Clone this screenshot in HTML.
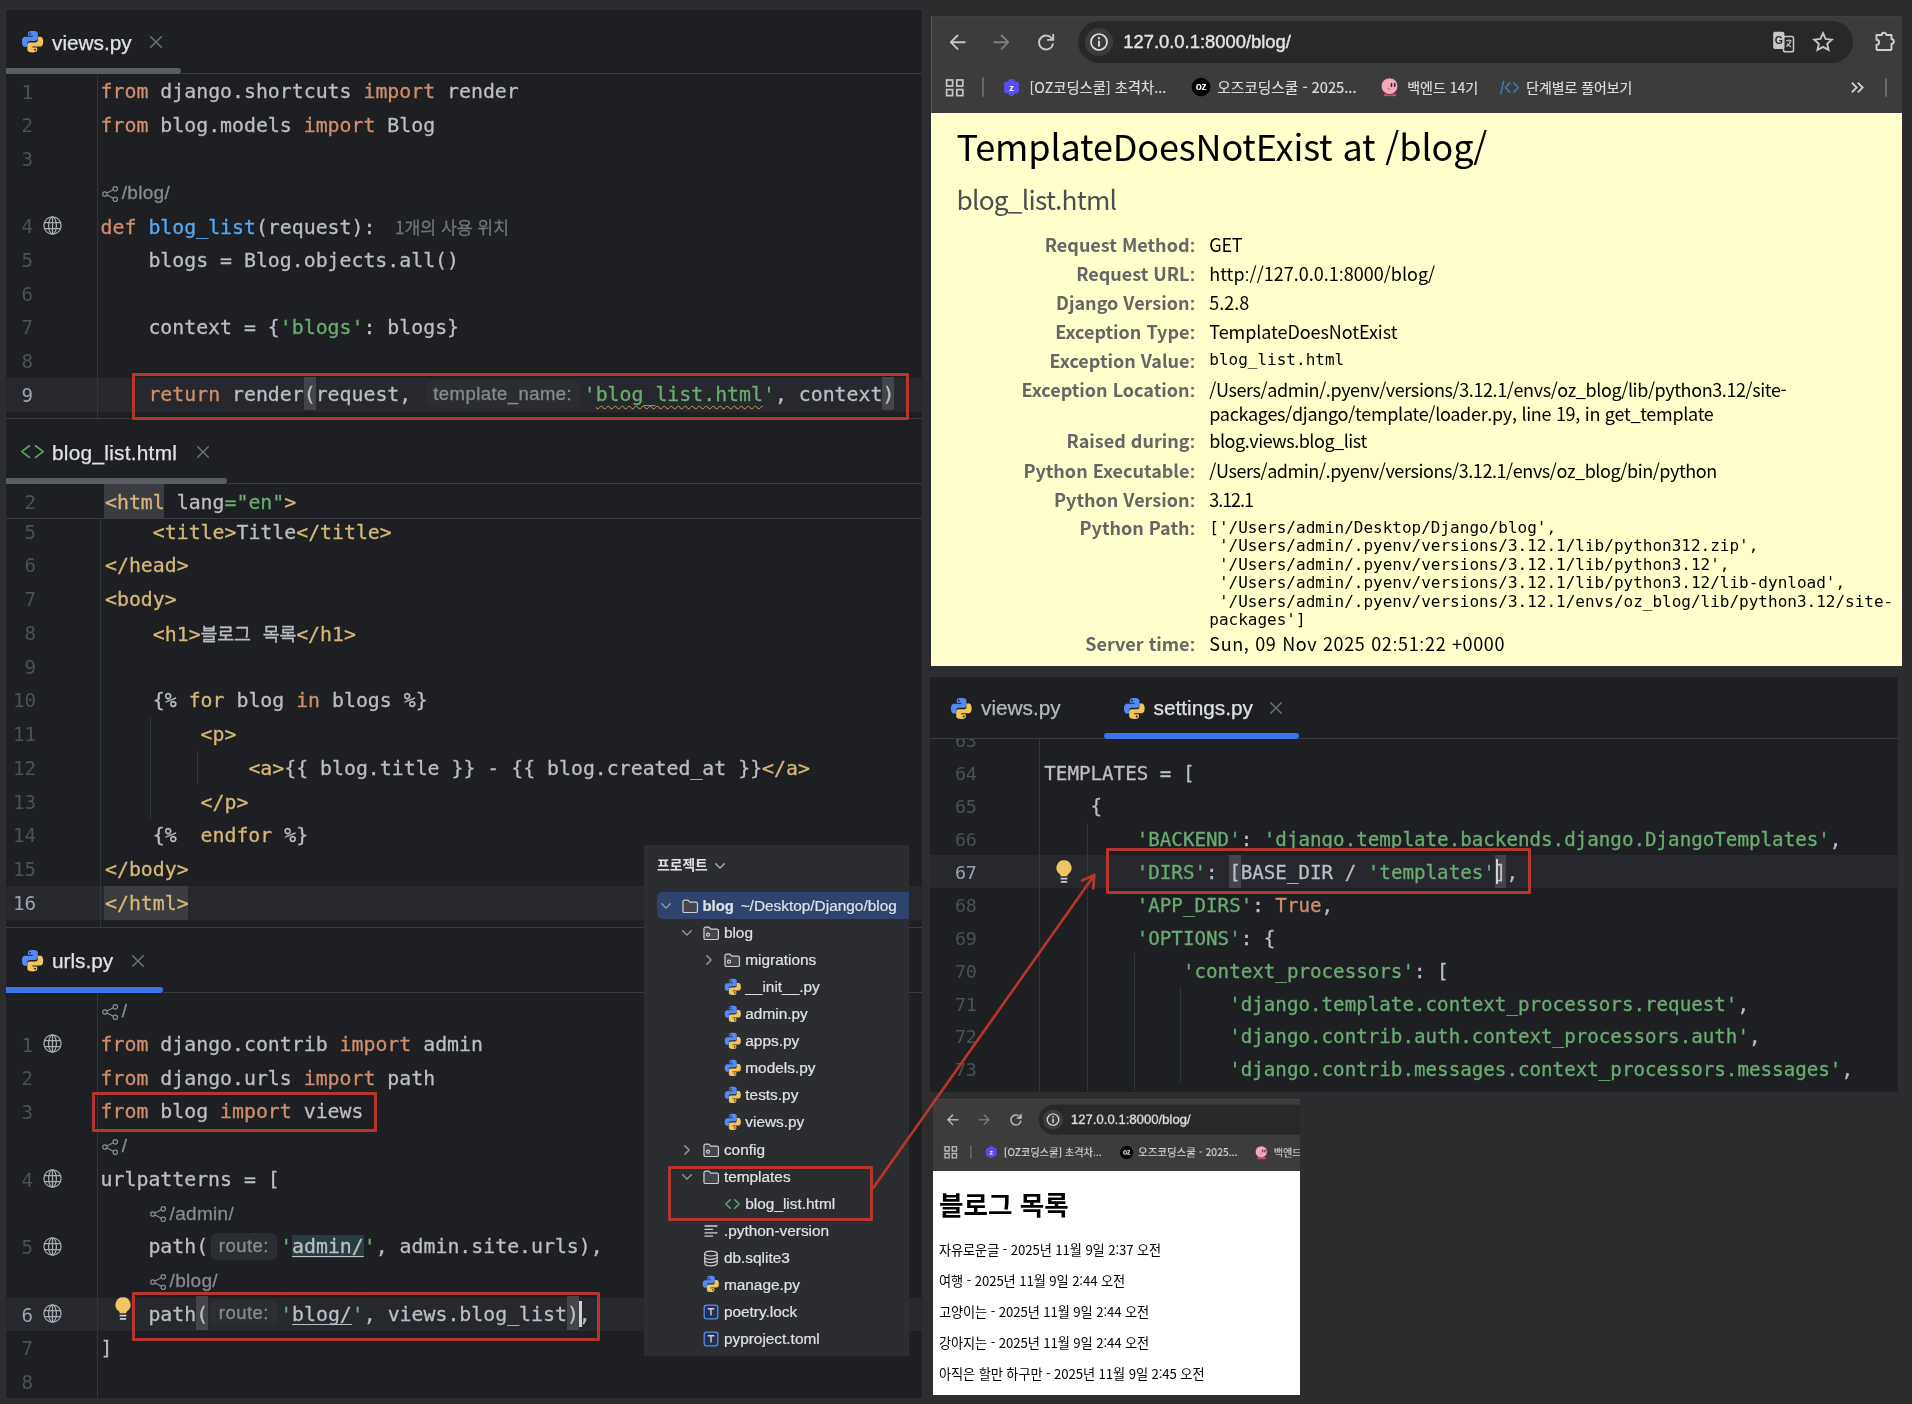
<!DOCTYPE html>
<html lang="ko">
<head>
<meta charset="utf-8">
<title>Django templates</title>
<style>
*{box-sizing:border-box;margin:0;padding:0}
html,body{width:1912px;height:1404px;overflow:hidden;background:#2c2d2f}
body{position:relative;will-change:transform;font-family:"Liberation Sans","Noto Sans CJK KR",sans-serif;color:#bcbec4}
.abs{position:absolute}
.ed{position:absolute;background:#1e1f22;overflow:hidden}
.hl{position:absolute;background:#393b40;height:1px}
.vl{position:absolute;background:#313438;width:1px;z-index:1}
.code{position:absolute;font-family:"DejaVu Sans Mono","Liberation Mono","Noto Sans CJK KR",monospace;font-size:19.85px;color:#bcbec4;-webkit-text-stroke:.3px}
.code>div{height:33.75px;line-height:33.75px;white-space:pre}
.nums{position:absolute;font-family:"DejaVu Sans Mono","Liberation Mono",monospace;font-size:19.2px;text-align:right;color:#4b5059;white-space:pre}
.nums>div{height:33.75px;line-height:33.75px}
.nums .cur{color:#a1a3ab}
.k{color:#cf8e6d}.s{color:#6aab73}.f{color:#56a8f5}.t{color:#d5b778}
.tab{position:absolute;-webkit-text-stroke:.25px;font-size:20.8px;color:#dfe1e5;white-space:pre}
.rowbg{position:absolute;background:#26282e}
.red{z-index:5;position:absolute;border:3.2px solid #b5362e;border-radius:1px}
.inl{font-family:"Liberation Sans","Noto Sans CJK KR",sans-serif;color:#868a91;font-size:19px;letter-spacing:.3px}
.u{text-decoration:underline;text-decoration-thickness:1px;text-underline-offset:3px;text-decoration-skip-ink:none}
.hint{display:inline-block;vertical-align:top;font-family:"Liberation Sans",sans-serif;color:#868a91;font-size:18.5px;letter-spacing:.45px;background:#2b2d30;border-radius:6px;height:27px;line-height:25.6px;margin-top:2.4px;text-align:center}

.chrome{position:absolute;background:#3c3c3c}
.pill{position:absolute;background:#282828}
.url{position:absolute;-webkit-text-stroke:.4px;color:#e3e3e3;white-space:pre}
.bm{position:absolute;-webkit-text-stroke:.2px;color:#dcdcdc;white-space:pre;font-family:"Noto Sans CJK KR","Liberation Sans",sans-serif}
.dj{position:absolute;font-family:"Noto Sans CJK KR","Liberation Sans",sans-serif;white-space:pre;color:#000;font-size:18px;line-height:26px}
.dj.th{color:#666;font-weight:bold;text-align:right;left:960px;width:235.5px}
.dj.td{left:1209.3px}
.mono{font-family:"DejaVu Sans Mono","Liberation Mono",monospace;font-size:16px}
.c2{font-size:19.22px}
.c2>div,.n2>div{height:32.9px !important;line-height:32.9px !important}
.n2{font-size:18.4px;letter-spacing:-.35px}
.li{left:6.5px;letter-spacing:-.1px;font:13.2px/20px "Noto Sans CJK KR","Liberation Sans",sans-serif;color:#000;white-space:pre}
.tr{position:absolute;-webkit-text-stroke:.2px;font:15.4px/22px "Liberation Sans","Noto Sans CJK KR",sans-serif;color:#dfe1e5;white-space:pre}
.tr b{font-weight:bold;font-size:14.9px}
.use{font-family:"Noto Sans CJK KR","Liberation Sans",sans-serif;font-size:17.2px;color:#6f737a;margin-left:19.5px}
.br{background:#43454a;display:inline-block;vertical-align:top;margin-top:-1.6px;padding-top:1.6px;height:33.3px;line-height:33.75px}
.wavy{text-decoration:underline wavy #c9a14c;text-decoration-thickness:1.2px;text-underline-offset:4px;text-decoration-skip-ink:none}
.ko{font-family:"Noto Sans CJK KR",sans-serif;font-size:18.4px;letter-spacing:-0.2px}
.c{font-style:normal;font-family:"Liberation Sans",sans-serif}
.c2 .br{height:32.7px;line-height:32.9px}
.v1>div{height:33.7px !important;line-height:33.7px !important}
</style>
</head>
<body>
<!-- ============ LEFT IDE COLUMN ============ -->
<div class="ed" id="left" style="left:6px;top:10px;width:916px;height:1388px"></div>

<!-- views.py -->
<div class="tab" style="left:52px;top:31px">views.py</div>
<div class="abs" style="left:6px;top:68px;width:175px;height:6px;background:#5a5d63;border-radius:0 3px 3px 0"></div>
<div class="hl" style="left:181px;top:73px;width:741px"></div>
<div class="vl" style="left:97px;top:75px;height:343px"></div>
<div class="rowbg" style="left:6px;top:378.2px;width:916px;height:33.8px"></div>
<div class="nums v1" style="left:6px;top:75.6px;width:27px"><div>1</div><div>2</div><div>3</div><div> </div><div>4</div><div>5</div><div>6</div><div>7</div><div>8</div><div class="cur">9</div></div>
<div class="code v1" style="left:100.6px;top:75.2px">
<div><span class="k">from</span> django.shortcuts <span class="k">import</span> render</div>
<div><span class="k">from</span> blog.models <span class="k">import</span> Blog</div>
<div> </div>
<div class="inl" style="padding-left:21.2px">/blog/</div>
<div><span class="k">def</span> <span class="f">blog_list</span>(request):<span class="use">1개의 사용 위치</span></div>
<div>    blogs = Blog.objects.all()</div>
<div> </div>
<div>    context = {<span class="s">'blogs'</span>: blogs}</div>
<div> </div>
<div>    <span class="k">return</span> render<span class="br">(</span>request, <span class="hint" style="width:154px;margin-left:2.5px;margin-right:4px">template_name:</span><span class="s">'<span class="wavy">blog_list.html</span>'</span>, context<span class="br">)</span></div>
</div>
<div class="red" style="left:132px;top:373px;width:777px;height:47px"></div>
<div class="hl" style="left:6px;top:418px;width:916px"></div>

<!-- blog_list.html -->
<div class="tab" style="left:52px;top:440.8px;letter-spacing:.27px">blog_list.html</div>
<div class="abs" style="left:6px;top:478px;width:221px;height:6px;background:#5a5d63;border-radius:0 3px 3px 0"></div>
<div class="hl" style="left:227px;top:483px;width:695px"></div>
<div class="vl" style="left:100px;top:519px;height:408px"></div>
<div class="rowbg" style="left:6px;top:886px;width:916px;height:33.5px"></div>
<div class="abs" style="left:104px;top:886px;width:84px;height:33.5px;background:#3a3c41"></div>
<div class="vl" style="left:150px;top:717px;height:101px"></div>
<div class="vl" style="left:197px;top:751px;height:33px"></div>
<div class="nums" style="left:6px;top:515.7px;width:30px"><div>5</div><div>6</div><div>7</div><div>8</div><div>9</div><div>10</div><div>11</div><div>12</div><div>13</div><div>14</div><div>15</div><div class="cur">16</div></div>
<div class="code" style="left:105px;top:515.7px">
<div>    <span class="t">&lt;title&gt;</span>Title<span class="t">&lt;/title&gt;</span></div>
<div><span class="t">&lt;/head&gt;</span></div>
<div><span class="t">&lt;body&gt;</span></div>
<div>    <span class="t">&lt;h1&gt;</span><span class="ko">블로그</span> <span class="ko">목록</span><span class="t">&lt;/h1&gt;</span></div>
<div> </div>
<div>    {% <span class="t">for</span> blog <span class="k">in</span> blogs %}</div>
<div>        <span class="t">&lt;p&gt;</span></div>
<div>            <span class="t">&lt;a&gt;</span>{{ blog.title }} - {{ blog.created_at }}<span class="t">&lt;/a&gt;</span></div>
<div>        <span class="t">&lt;/p&gt;</span></div>
<div>    {%  <span class="t">endfor</span> %}</div>
<div><span class="t">&lt;/body&gt;</span></div>
<div><span class="t">&lt;/html&gt;</span></div>
</div>
<!-- sticky line -->
<div class="abs" style="left:6px;top:484px;width:916px;height:35px;background:#1e1f22;border-bottom:1px solid #393b40"></div>
<div class="abs" style="left:104px;top:484px;width:60px;height:34px;background:#3a3c41"></div>
<div class="nums" style="left:6px;top:485.9px;width:30px"><div>2</div></div>
<div class="code" style="left:105px;top:485.9px"><div><span class="t">&lt;html</span> lang<span class="s">="en"</span><span class="t">&gt;</span></div></div>
<div class="hl" style="left:6px;top:927px;width:916px"></div>

<!-- urls.py -->
<div class="tab" style="left:52px;top:949px">urls.py</div>
<div class="abs" style="left:6px;top:986.5px;width:157px;height:6.5px;background:#3d73e8;border-radius:0 3px 3px 0"></div>
<div class="hl" style="left:163px;top:992px;width:759px"></div>
<div class="vl" style="left:97px;top:994px;height:404px"></div>
<div class="rowbg" style="left:6px;top:1297.5px;width:916px;height:33px"></div>
<div class="nums" style="left:6px;top:994.9px;width:27px"><div> </div><div>1</div><div>2</div><div>3</div><div> </div><div>4</div><div> </div><div>5</div><div> </div><div class="cur">6</div><div>7</div><div>8</div></div>
<div class="code" style="left:100.6px;top:994.1px">
<div class="inl" style="padding-left:21.2px">/</div>
<div><span class="k">from</span> django.contrib <span class="k">import</span> admin</div>
<div><span class="k">from</span> django.urls <span class="k">import</span> path</div>
<div><span class="k">from</span> blog <span class="k">import</span> views</div>
<div class="inl" style="padding-left:21.2px">/</div>
<div>urlpatterns = [</div>
<div class="inl" style="padding-left:69px">/admin/</div>
<div>    path(<span class="hint" style="width:65.5px;margin-left:3px;margin-right:3.5px">route:</span><span class="s">'</span><span class="u" style="background:#293c40">admin/</span><span class="s">'</span>, admin.site.urls),</div>
<div class="inl" style="padding-left:69px">/blog/</div>
<div>    path<span class="br">(</span><span class="hint" style="width:65.5px;margin-left:3px;margin-right:3.5px">route:</span><span class="s">'</span><span class="u">blog/</span><span class="s">'</span>, views.blog_list<span class="br">)</span>,</div>
<div>]</div>
<div> </div>
</div>
<div class="red" style="left:92px;top:1092.2px;width:284.5px;height:40.2px"></div>
<div class="red" style="left:132px;top:1292.2px;width:468px;height:48.8px"></div>

<!-- ============ BROWSER 1 ============ -->
<!--CHROME-->
<!-- ============ BROWSER 1 toolbar ============ -->
<div class="chrome" style="left:931px;top:16px;width:970.5px;height:97px;border-top:1.5px solid #414141;border-left:1.8px solid #5a5a5a">
<div class="abs" style="left:-1.8px;top:-1.5px">
<div class="pill" style="left:148px;top:5px;width:774.5px;height:42px;border-radius:21px"></div>
<div class="abs" style="left:154.3px;top:12.1px;width:28.2px;height:28.2px;border-radius:50%;background:#3c3c3c"></div>
<svg class="abs" style="left:17px;top:16px" width="110" height="21" viewBox="948 32 110 21" fill="none" stroke-linecap="round" stroke-linejoin="round"><path d="M965.800 42.200H952M958.500 35.500l-6.700 6.700 6.700 6.700" stroke="#c7c7c7" stroke-width="1.900"/><path d="M995.300 42.200h13.800M1002.600 35.500l6.700 6.700-6.700 6.700" stroke="#7d7d7d" stroke-width="1.900"/><path d="M1053.300 39.300a7 7 0 1 0 .6 4.800" stroke="#c7c7c7" stroke-width="1.900"/><path d="M1054.200 34.600v5.300h-5.300" stroke="#c7c7c7" stroke-width="1.900"/></svg>
<svg class="abs" style="left:158.4px;top:16.2px" width="20" height="20" viewBox="0 0 20 20" fill="none"><circle cx="10" cy="10" r="8" stroke="#e3e3e3" stroke-width="1.700"/><path d="M10 9.300v4.800" stroke="#e3e3e3" stroke-width="1.800" stroke-linecap="round"/><circle cx="10" cy="6.200" r="1.100" fill="#e3e3e3"/></svg>
<div class="url" style="left:193px;top:15px;font-size:18.4px;line-height:22px">127.0.0.1:8000/blog/</div>
<svg class="abs" style="left:842px;top:14px" width="24" height="24" viewBox="1773 30 24 24" fill="none"><rect x="1784.500" y="36.400" width="10" height="15.300" rx="1.800" stroke="#c7c7c7" stroke-width="1.500"/><path d="M1787 40.800h5.600M1789.800 39.300v1.500M1791.600 40.800c-.5 2.600-2.200 4.600-4.400 5.800M1788.200 43.200c.8 1.600 2.200 2.900 3.800 3.700" stroke="#c7c7c7" stroke-width="1.100"/><rect x="1774.200" y="31.800" width="11.200" height="17.200" rx="1.800" fill="#c7c7c7"/><text x="1779.800" y="44.200" font-family="Liberation Sans,sans-serif" font-size="10.500" font-weight="bold" fill="#282828" text-anchor="middle">G</text></svg>
<svg class="abs" style="left:881px;top:14px" width="24" height="24" viewBox="-12 -12 24 24" fill="none"><path d="M0-8.800l2.600 5.700 6.200.7-4.600 4.200 1.300 6.100L0 4.800l-5.500 3.100 1.300-6.100-4.600-4.200 6.200-.7z" stroke="#c7c7c7" stroke-width="1.900" stroke-linejoin="miter"/></svg>
<svg class="abs" style="left:944px;top:13px" width="24" height="24" viewBox="1875 29 24 24" fill="none"><path d="M1877.500 35h5.300a2.300 2.300 0 1 1 4.600 0h5.100v4.300a2.300 2.300 0 1 1 0 4.600v5.300a.8.800 0 0 1-.8.800h-13.400a.8.800 0 0 1-.8-.8v-4.300a2.600 2.600 0 1 0 0-5.200z" stroke="#d0d0d0" stroke-width="1.900" stroke-linejoin="round"/></svg>
<svg class="abs" style="left:15px;top:62px" width="20" height="20" viewBox="946 78 20 20" fill="none" stroke="#c7c7c7" stroke-width="1.700"><rect x="947.600" y="80" width="6" height="6"/><rect x="957.800" y="80" width="6" height="6"/><rect x="947.600" y="89.600" width="6" height="6"/><rect x="957.800" y="89.600" width="6" height="6"/></svg>
<div class="abs" style="left:52.2px;top:61.8px;width:2px;height:19.600px;background:#666;border-radius:1px"></div>
<svg class="abs" style="left:72px;top:62px" width="19" height="19" viewBox="-9.500 -9.500 19 19"><g fill="#5b4cf0"><circle r="6.300"/><circle cx="0" cy="-5" r="3.400"/><circle cx="4.300" cy="-2.500" r="3.400"/><circle cx="4.300" cy="2.500" r="3.400"/><circle cx="0" cy="5" r="3.400"/><circle cx="-4.300" cy="2.500" r="3.400"/><circle cx="-4.300" cy="-2.500" r="3.400"/></g><text x="0.200" y="3.200" font-family="Liberation Sans,sans-serif" font-size="9.500" font-weight="bold" fill="#fff" text-anchor="middle">z</text></svg>
<div class="bm" style="left:99.3px;top:60px;font-size:14.3px;line-height:22px">[OZ코딩스쿨] 초격차...</div>
<svg class="abs" style="left:261px;top:61.5px" width="20" height="20" viewBox="-10 -10 20 20"><circle r="9.300" fill="#000"/><text x="0" y="3.300" font-family="Liberation Sans,sans-serif" font-size="10" font-weight="bold" fill="#fff" text-anchor="middle" letter-spacing="-0.300">oz</text></svg>
<div class="bm" style="left:287px;top:60px;font-size:14.7px;line-height:22px">오즈코딩스쿨 - 2025...</div>
<svg class="abs" style="left:449px;top:60.5px" width="21" height="21" viewBox="-10.500 -10.500 21 21"><ellipse cx="-2.500" cy="8.300" rx="3.300" ry="1.500" fill="#d6456a"/><ellipse cx="3.500" cy="8.300" rx="3.300" ry="1.500" fill="#d6456a"/><circle cx="0" cy="-0.300" r="8.300" fill="#f6a9bd" stroke="#4a2a33" stroke-width=".7"/><ellipse cx="2" cy="-1.500" rx=".9" ry="2.200" fill="#2b2b3a"/><ellipse cx="5.200" cy="-1.500" rx=".9" ry="2.200" fill="#2b2b3a"/><ellipse cx="-.8" cy="2.300" rx="1.500" ry=".9" fill="#ee6d8f"/></svg>
<div class="bm" style="left:477px;top:60px;font-size:14px;line-height:22px">백엔드 14기</div>
<svg class="abs" style="left:569px;top:62px" width="22" height="19" viewBox="1500 78 22 19" fill="none" stroke="#3f7fc6" stroke-width="1.400" stroke-linecap="round" stroke-linejoin="round"><path d="M1504.600 81.500l-2.800 12.400M1510.800 83l-4.400 4.600 4.400 4.600M1514.800 83l4.400 4.600-4.400 4.600"/></svg>
<div class="bm" style="left:596px;top:60px;font-size:13.9px;line-height:22px">단계별로 풀어보기</div>
<svg class="abs" style="left:919px;top:64px" width="16" height="15" viewBox="1850 80 16 15" fill="none" stroke="#d0d0d0" stroke-width="1.800"><path d="M1852.800 82.700l4.900 4.800-4.900 4.800M1858.800 82.700l4.900 4.800-4.900 4.800"/></svg>
<div class="abs" style="left:954.5px;top:62px;width:2.200px;height:19.300px;background:#6a6a6a;border-radius:1px"></div>
</div>
</div>
<!-- ============ BROWSER 2 toolbar ============ -->
<div class="chrome" style="left:932.5px;top:1099px;width:367.5px;height:72px;overflow:hidden;border-top:1px solid #474747">
<div class="abs" style="left:0;top:1.1px;width:970px;height:97px;transform:scale(0.7143);transform-origin:0 0">
<div class="pill" style="left:148px;top:5px;width:774.5px;height:42px;border-radius:21px"></div>
<div class="abs" style="left:154.3px;top:12.1px;width:28.2px;height:28.2px;border-radius:50%;background:#3c3c3c"></div>
<svg class="abs" style="left:17px;top:16px" width="110" height="21" viewBox="948 32 110 21" fill="none" stroke-linecap="round" stroke-linejoin="round"><path d="M965.800 42.200H952M958.500 35.500l-6.700 6.700 6.700 6.700" stroke="#c7c7c7" stroke-width="1.900"/><path d="M995.300 42.200h13.800M1002.600 35.500l6.700 6.700-6.700 6.700" stroke="#7d7d7d" stroke-width="1.900"/><path d="M1053.300 39.300a7 7 0 1 0 .6 4.800" stroke="#c7c7c7" stroke-width="1.900"/><path d="M1054.200 34.600v5.300h-5.300" stroke="#c7c7c7" stroke-width="1.900"/></svg>
<svg class="abs" style="left:158.4px;top:16.2px" width="20" height="20" viewBox="0 0 20 20" fill="none"><circle cx="10" cy="10" r="8" stroke="#e3e3e3" stroke-width="1.700"/><path d="M10 9.300v4.800" stroke="#e3e3e3" stroke-width="1.800" stroke-linecap="round"/><circle cx="10" cy="6.200" r="1.100" fill="#e3e3e3"/></svg>
<div class="url" style="left:193px;top:15px;font-size:18.4px;line-height:22px">127.0.0.1:8000/blog/</div>
<svg class="abs" style="left:842px;top:14px" width="24" height="24" viewBox="1773 30 24 24" fill="none"><rect x="1784.500" y="36.400" width="10" height="15.300" rx="1.800" stroke="#c7c7c7" stroke-width="1.500"/><path d="M1787 40.800h5.600M1789.800 39.300v1.500M1791.600 40.800c-.5 2.600-2.200 4.600-4.400 5.800M1788.200 43.200c.8 1.600 2.200 2.900 3.800 3.700" stroke="#c7c7c7" stroke-width="1.100"/><rect x="1774.200" y="31.800" width="11.200" height="17.200" rx="1.800" fill="#c7c7c7"/><text x="1779.800" y="44.200" font-family="Liberation Sans,sans-serif" font-size="10.500" font-weight="bold" fill="#282828" text-anchor="middle">G</text></svg>
<svg class="abs" style="left:881px;top:14px" width="24" height="24" viewBox="-12 -12 24 24" fill="none"><path d="M0-8.800l2.600 5.700 6.200.7-4.600 4.200 1.300 6.100L0 4.800l-5.500 3.100 1.300-6.100-4.600-4.200 6.200-.7z" stroke="#c7c7c7" stroke-width="1.900" stroke-linejoin="miter"/></svg>
<svg class="abs" style="left:944px;top:13px" width="24" height="24" viewBox="1875 29 24 24" fill="none"><path d="M1877.500 35h5.300a2.300 2.300 0 1 1 4.600 0h5.100v4.300a2.300 2.300 0 1 1 0 4.600v5.300a.8.800 0 0 1-.8.800h-13.400a.8.800 0 0 1-.8-.8v-4.300a2.600 2.600 0 1 0 0-5.200z" stroke="#d0d0d0" stroke-width="1.900" stroke-linejoin="round"/></svg>
<svg class="abs" style="left:15px;top:62px" width="20" height="20" viewBox="946 78 20 20" fill="none" stroke="#c7c7c7" stroke-width="1.700"><rect x="947.600" y="80" width="6" height="6"/><rect x="957.800" y="80" width="6" height="6"/><rect x="947.600" y="89.600" width="6" height="6"/><rect x="957.800" y="89.600" width="6" height="6"/></svg>
<div class="abs" style="left:52.2px;top:61.8px;width:2px;height:19.600px;background:#666;border-radius:1px"></div>
<svg class="abs" style="left:72px;top:62px" width="19" height="19" viewBox="-9.500 -9.500 19 19"><g fill="#5b4cf0"><circle r="6.300"/><circle cx="0" cy="-5" r="3.400"/><circle cx="4.300" cy="-2.500" r="3.400"/><circle cx="4.300" cy="2.500" r="3.400"/><circle cx="0" cy="5" r="3.400"/><circle cx="-4.300" cy="2.500" r="3.400"/><circle cx="-4.300" cy="-2.500" r="3.400"/></g><text x="0.200" y="3.200" font-family="Liberation Sans,sans-serif" font-size="9.500" font-weight="bold" fill="#fff" text-anchor="middle">z</text></svg>
<div class="bm" style="left:99.3px;top:60px;font-size:14.3px;line-height:22px">[OZ코딩스쿨] 초격차...</div>
<svg class="abs" style="left:261px;top:61.5px" width="20" height="20" viewBox="-10 -10 20 20"><circle r="9.300" fill="#000"/><text x="0" y="3.300" font-family="Liberation Sans,sans-serif" font-size="10" font-weight="bold" fill="#fff" text-anchor="middle" letter-spacing="-0.300">oz</text></svg>
<div class="bm" style="left:287px;top:60px;font-size:14.7px;line-height:22px">오즈코딩스쿨 - 2025...</div>
<svg class="abs" style="left:449px;top:60.5px" width="21" height="21" viewBox="-10.500 -10.500 21 21"><ellipse cx="-2.500" cy="8.300" rx="3.300" ry="1.500" fill="#d6456a"/><ellipse cx="3.500" cy="8.300" rx="3.300" ry="1.500" fill="#d6456a"/><circle cx="0" cy="-0.300" r="8.300" fill="#f6a9bd" stroke="#4a2a33" stroke-width=".7"/><ellipse cx="2" cy="-1.500" rx=".9" ry="2.200" fill="#2b2b3a"/><ellipse cx="5.200" cy="-1.500" rx=".9" ry="2.200" fill="#2b2b3a"/><ellipse cx="-.8" cy="2.300" rx="1.500" ry=".9" fill="#ee6d8f"/></svg>
<div class="bm" style="left:477px;top:60px;font-size:14px;line-height:22px">백엔드 14기</div>
</div>
</div>
<!--/CHROME-->
<div class="abs" id="yellow" style="left:931px;top:113px;width:970.5px;height:553px;background:#ffffcc"></div>
<div class="dj" style="left:956.5px;top:118.8px;font-size:36px;line-height:52px;letter-spacing:-0.15px">TemplateDoesNotExist at /blog/</div>
<div class="dj" style="left:956.5px;top:179.4px;font-size:26.3px;line-height:40px;font-weight:400;color:#4d4d52;letter-spacing:-0.78px">blog_list.html</div>

<div class="dj th" style="top:231.1px">Request Method<i class="c">:</i></div><div class="dj td" style="top:231.1px;letter-spacing:-0.27px">GET</div>
<div class="dj th" style="top:260.0px">Request URL<i class="c">:</i></div><div class="dj td" style="top:260.0px">http<i class="c">:</i>//127.0.0.1<i class="c">:</i>8000/blog/</div>
<div class="dj th" style="top:288.9px">Django Version<i class="c">:</i></div><div class="dj td" style="top:288.9px">5.2.8</div>
<div class="dj th" style="top:317.8px">Exception Type<i class="c">:</i></div><div class="dj td" style="top:317.8px;letter-spacing:-0.07px">TemplateDoesNotExist</div>
<div class="dj th" style="top:346.7px">Exception Value<i class="c">:</i></div><div class="dj td mono" style="top:346.7px">blog_list.html</div>
<div class="dj th" style="top:375.6px">Exception Location<i class="c">:</i></div><div class="dj td" style="top:375.6px;letter-spacing:-0.4px">/Users/admin/.pyenv/versions/3.12.1/envs/oz_blog/lib/python3.12/site-</div>
<div class="dj td" style="top:399.9px;letter-spacing:-0.3px">packages/django/template/loader.py, line 19, in get_template</div>
<div class="dj th" style="top:427.2px">Raised during<i class="c">:</i></div><div class="dj td" style="top:427.2px;letter-spacing:-0.47px">blog.views.blog_list</div>
<div class="dj th" style="top:456.7px">Python Executable<i class="c">:</i></div><div class="dj td" style="top:456.7px;letter-spacing:-0.42px">/Users/admin/.pyenv/versions/3.12.1/envs/oz_blog/bin/python</div>
<div class="dj th" style="top:485.7px">Python Version<i class="c">:</i></div><div class="dj td" style="top:485.7px;letter-spacing:-1.06px">3.12.1</div>
<div class="dj th" style="top:514.2px">Python Path<i class="c">:</i></div>
<div class="dj td mono" style="top:519px;line-height:18.4px">['/Users/admin/Desktop/Django/blog',
 '/Users/admin/.pyenv/versions/3.12.1/lib/python312.zip',
 '/Users/admin/.pyenv/versions/3.12.1/lib/python3.12',
 '/Users/admin/.pyenv/versions/3.12.1/lib/python3.12/lib-dynload',
 '/Users/admin/.pyenv/versions/3.12.1/envs/oz_blog/lib/python3.12/site-
packages']</div>
<div class="dj th" style="top:629.7px">Server time<i class="c">:</i></div><div class="dj td" style="top:629.7px;letter-spacing:0.64px">Sun, 09 Nov 2025 02<i class="c">:</i>51<i class="c">:</i>22 +0000</div>

<!-- ============ SETTINGS EDITOR ============ -->
<div class="ed" style="left:930px;top:677px;width:968px;height:414.5px"></div>
<div class="tab" style="left:981px;top:696px;color:#b4b8bf">views.py</div>
<div class="tab" style="left:1153.5px;top:696px">settings.py</div>
<div class="abs" style="left:1104px;top:733px;width:195px;height:6px;background:#3d73e8;border-radius:3px"></div>
<div class="hl" style="left:930px;top:738px;width:174px"></div>
<div class="hl" style="left:1299px;top:738px;width:599.5px"></div>
<div class="vl" style="left:1039px;top:739px;height:352.5px"></div>
<div class="rowbg" style="left:930px;top:855.2px;width:968.5px;height:33px"></div>
<div class="vl" style="left:1087px;top:823px;height:268px"></div>
<div class="vl" style="left:1133.5px;top:953px;height:138px"></div>
<div class="vl" style="left:1180px;top:986px;height:97px"></div>
<div class="abs" style="left:930px;top:739px;width:968.5px;height:352.5px;overflow:hidden">
<div class="nums n2" style="left:0;top:-13.6px;width:46.5px"><div>63</div><div>64</div><div>65</div><div>66</div><div class="cur">67</div><div>68</div><div>69</div><div>70</div><div>71</div><div>72</div><div>73</div><div>74</div></div>
<div class="code c2" style="left:114.3px;top:-13.6px">
<div> </div>
<div>TEMPLATES = [</div>
<div>    {</div>
<div>        <span class="s">'BACKEND'</span>: <span class="s">'django.template.backends.django.DjangoTemplates'</span>,</div>
<div>        <span class="s">'DIRS'</span>: <span class="br">[</span>BASE_DIR / <span class="s">'templates'</span><span class="br">]</span>,</div>
<div>        <span class="s">'APP_DIRS'</span>: <span class="k">True</span>,</div>
<div>        <span class="s">'OPTIONS'</span>: {</div>
<div>            <span class="s">'context_processors'</span>: [</div>
<div>                <span class="s">'django.template.context_processors.request'</span>,</div>
<div>                <span class="s">'django.contrib.auth.context_processors.auth'</span>,</div>
<div>                <span class="s">'django.contrib.messages.context_processors.messages'</span>,</div>
<div>            ],</div>
</div>
</div>
<div class="red" style="left:1105.5px;top:847.5px;width:425.5px;height:46.5px"></div>

<!-- ============ BROWSER 2 ============ -->
<div class="abs" style="left:932.5px;top:1099px;width:367.5px;height:296px;overflow:hidden">
<div class="abs" style="left:0;top:71.5px;width:367.5px;height:224.5px;background:#fff"></div>
<div class="abs" style="left:6.5px;top:86px;font:bold 26.6px/38px 'Noto Sans CJK KR','Liberation Sans',sans-serif;color:#000;white-space:pre">블로그 목록</div>
<div class="abs li" style="top:140.5px">자유로운글 - 2025년 11월 9일 2:37 오전</div>
<div class="abs li" style="top:171.6px">여행 - 2025년 11월 9일 2:44 오전</div>
<div class="abs li" style="top:202.7px">고양이는 - 2025년 11월 9일 2:44 오전</div>
<div class="abs li" style="top:233.8px">강아지는 - 2025년 11월 9일 2:44 오전</div>
<div class="abs li" style="top:264.9px">아직은 할만 하구만 - 2025년 11월 9일 2:45 오전</div>
</div>

<!--TREE-->
<!-- ============ PROJECT PANEL ============ -->
<div class="abs" style="left:643.8px;top:844.5px;width:265.2px;height:511px;background:#2b2d30"></div>
<div class="abs" style="left:657px;top:853px;font:bold 13.8px/22px 'Noto Sans CJK KR','Liberation Sans',sans-serif;color:#dfe1e5;white-space:pre">프로젝트</div>
<svg class="abs" style="left:714px;top:859.5px" width="12" height="12" viewBox="0 0 12 12"><path d="M1.7 3.800L6 8.100l4.300-4.300" fill="none" stroke="#b4b8bf" stroke-width="1.300" stroke-linecap="round" stroke-linejoin="round"/></svg>
<div class="abs" style="left:656.6px;top:892px;width:252.4px;height:27px;background:#2e436e;border-radius:5px 0 0 5px"></div>
<svg class="abs" style="left:660.3px;top:900.0px" width="12" height="12" viewBox="0 0 12 12"><path d="M1.7 3.800L6 8.100l4.300-4.300" fill="none" stroke="#9da0a8" stroke-width="1.300" stroke-linecap="round" stroke-linejoin="round"/></svg>
<svg class="abs" style="left:680.5px;top:896.8px" width="18.4" height="18.4" viewBox="0 0 16 16"><path d="M1.7 4.2c0-.8.6-1.400 1.400-1.400h2.600c.4 0 .8.200 1 .5l1 1.200h5.200c.8 0 1.400.6 1.400 1.400v6.200c0 .8-.6 1.400-1.400 1.400H3.100c-.8 0-1.400-.6-1.400-1.400z" fill="#43454a" stroke="#ced0d6" stroke-width="1.05" stroke-linejoin="round"/></svg>
<div class="tr" style="left:702.5px;top:894.8px"><b>blog</b><span style="margin-left:6.7px">~/Desktop/Django/blog</span></div>
<svg class="abs" style="left:681.4px;top:927.1px" width="12" height="12" viewBox="0 0 12 12"><path d="M1.7 3.800L6 8.100l4.300-4.300" fill="none" stroke="#9da0a8" stroke-width="1.300" stroke-linecap="round" stroke-linejoin="round"/></svg>
<svg class="abs" style="left:701.6px;top:923.9px" width="18.4" height="18.4" viewBox="0 0 16 16"><path d="M1.7 4.2c0-.8.6-1.400 1.400-1.400h2.600c.4 0 .8.200 1 .5l1 1.200h5.200c.8 0 1.400.6 1.400 1.400v6.200c0 .8-.6 1.400-1.400 1.400H3.100c-.8 0-1.400-.6-1.400-1.400z" fill="#43454a" stroke="#ced0d6" stroke-width="1.05" stroke-linejoin="round"/><circle cx="5.2" cy="9.3" r="1.3" fill="none" stroke="#ced0d6" stroke-width="1"/></svg>
<div class="tr" style="left:723.9px;top:921.9px">blog</div>
<svg class="abs" style="left:702.8px;top:954.2px" width="12" height="12" viewBox="0 0 12 12"><path d="M3.800 1.700L8.100 6l-4.300 4.300" fill="none" stroke="#9da0a8" stroke-width="1.300" stroke-linecap="round" stroke-linejoin="round"/></svg>
<svg class="abs" style="left:723.0px;top:951.0px" width="18.4" height="18.4" viewBox="0 0 16 16"><path d="M1.7 4.2c0-.8.6-1.400 1.400-1.400h2.600c.4 0 .8.200 1 .5l1 1.200h5.200c.8 0 1.400.6 1.400 1.400v6.200c0 .8-.6 1.400-1.400 1.400H3.100c-.8 0-1.400-.6-1.400-1.400z" fill="#43454a" stroke="#ced0d6" stroke-width="1.05" stroke-linejoin="round"/><circle cx="5.2" cy="9.3" r="1.3" fill="none" stroke="#ced0d6" stroke-width="1"/></svg>
<div class="tr" style="left:745.3px;top:949.0px">migrations</div>
<svg class="abs" style="left:723.6px;top:977.5px" width="17.6" height="17.8" viewBox="0 0 24 24" preserveAspectRatio="none"><path fill="#548af7" d="M12 1C7 1 7.200 3.200 7.200 3.200V6h5v1H4.500S1 6.600 1 12s3 5.200 3 5.200h2.500v-3s-.2-3 2.900-3h5.200s2.800.1 2.800-2.700V3.800S17.900 1 12 1z"/><circle cx="9.400" cy="3.700" r="1" fill="#1e1f22"/><g transform="rotate(180 12 12)"><path fill="#f2c55c" d="M12 1C7 1 7.200 3.200 7.200 3.200V6h5v1H4.500S1 6.600 1 12s3 5.200 3 5.200h2.500v-3s-.2-3 2.900-3h5.200s2.800.1 2.800-2.700V3.800S17.900 1 12 1z"/><circle cx="9.400" cy="3.700" r="1" fill="#1e1f22"/></g></svg>
<div class="tr" style="left:745.3px;top:976.0px">__init__.py</div>
<svg class="abs" style="left:723.6px;top:1004.6px" width="17.6" height="17.8" viewBox="0 0 24 24" preserveAspectRatio="none"><path fill="#548af7" d="M12 1C7 1 7.200 3.200 7.200 3.200V6h5v1H4.500S1 6.600 1 12s3 5.200 3 5.200h2.500v-3s-.2-3 2.900-3h5.200s2.800.1 2.800-2.700V3.800S17.900 1 12 1z"/><circle cx="9.400" cy="3.700" r="1" fill="#1e1f22"/><g transform="rotate(180 12 12)"><path fill="#f2c55c" d="M12 1C7 1 7.200 3.200 7.200 3.200V6h5v1H4.500S1 6.600 1 12s3 5.200 3 5.200h2.500v-3s-.2-3 2.900-3h5.200s2.800.1 2.800-2.700V3.800S17.900 1 12 1z"/><circle cx="9.400" cy="3.700" r="1" fill="#1e1f22"/></g></svg>
<div class="tr" style="left:745.3px;top:1003.1px">admin.py</div>
<svg class="abs" style="left:723.6px;top:1031.7px" width="17.6" height="17.8" viewBox="0 0 24 24" preserveAspectRatio="none"><path fill="#548af7" d="M12 1C7 1 7.200 3.200 7.200 3.200V6h5v1H4.500S1 6.600 1 12s3 5.200 3 5.200h2.500v-3s-.2-3 2.900-3h5.200s2.800.1 2.800-2.700V3.800S17.900 1 12 1z"/><circle cx="9.400" cy="3.700" r="1" fill="#1e1f22"/><g transform="rotate(180 12 12)"><path fill="#f2c55c" d="M12 1C7 1 7.200 3.200 7.200 3.200V6h5v1H4.500S1 6.600 1 12s3 5.200 3 5.200h2.500v-3s-.2-3 2.900-3h5.200s2.800.1 2.800-2.700V3.800S17.900 1 12 1z"/><circle cx="9.400" cy="3.700" r="1" fill="#1e1f22"/></g></svg>
<div class="tr" style="left:745.3px;top:1030.2px">apps.py</div>
<svg class="abs" style="left:723.6px;top:1058.8px" width="17.6" height="17.8" viewBox="0 0 24 24" preserveAspectRatio="none"><path fill="#548af7" d="M12 1C7 1 7.200 3.200 7.200 3.200V6h5v1H4.500S1 6.600 1 12s3 5.200 3 5.200h2.500v-3s-.2-3 2.900-3h5.200s2.800.1 2.800-2.700V3.800S17.900 1 12 1z"/><circle cx="9.400" cy="3.700" r="1" fill="#1e1f22"/><g transform="rotate(180 12 12)"><path fill="#f2c55c" d="M12 1C7 1 7.200 3.200 7.200 3.200V6h5v1H4.500S1 6.600 1 12s3 5.200 3 5.200h2.500v-3s-.2-3 2.900-3h5.200s2.800.1 2.800-2.700V3.800S17.900 1 12 1z"/><circle cx="9.400" cy="3.700" r="1" fill="#1e1f22"/></g></svg>
<div class="tr" style="left:745.3px;top:1057.3px">models.py</div>
<svg class="abs" style="left:723.6px;top:1085.9px" width="17.6" height="17.8" viewBox="0 0 24 24" preserveAspectRatio="none"><path fill="#548af7" d="M12 1C7 1 7.200 3.200 7.200 3.200V6h5v1H4.500S1 6.600 1 12s3 5.200 3 5.200h2.500v-3s-.2-3 2.900-3h5.200s2.800.1 2.800-2.700V3.800S17.900 1 12 1z"/><circle cx="9.400" cy="3.700" r="1" fill="#1e1f22"/><g transform="rotate(180 12 12)"><path fill="#f2c55c" d="M12 1C7 1 7.200 3.200 7.200 3.200V6h5v1H4.500S1 6.600 1 12s3 5.200 3 5.200h2.500v-3s-.2-3 2.900-3h5.200s2.800.1 2.800-2.700V3.800S17.900 1 12 1z"/><circle cx="9.400" cy="3.700" r="1" fill="#1e1f22"/></g></svg>
<div class="tr" style="left:745.3px;top:1084.4px">tests.py</div>
<svg class="abs" style="left:723.6px;top:1112.9px" width="17.6" height="17.8" viewBox="0 0 24 24" preserveAspectRatio="none"><path fill="#548af7" d="M12 1C7 1 7.200 3.200 7.200 3.200V6h5v1H4.500S1 6.600 1 12s3 5.200 3 5.200h2.500v-3s-.2-3 2.900-3h5.200s2.800.1 2.800-2.700V3.800S17.900 1 12 1z"/><circle cx="9.400" cy="3.700" r="1" fill="#1e1f22"/><g transform="rotate(180 12 12)"><path fill="#f2c55c" d="M12 1C7 1 7.200 3.200 7.200 3.200V6h5v1H4.500S1 6.600 1 12s3 5.200 3 5.200h2.500v-3s-.2-3 2.900-3h5.200s2.800.1 2.800-2.700V3.800S17.900 1 12 1z"/><circle cx="9.400" cy="3.700" r="1" fill="#1e1f22"/></g></svg>
<div class="tr" style="left:745.3px;top:1111.4px">views.py</div>
<svg class="abs" style="left:681.4px;top:1143.7px" width="12" height="12" viewBox="0 0 12 12"><path d="M3.800 1.700L8.100 6l-4.300 4.300" fill="none" stroke="#9da0a8" stroke-width="1.300" stroke-linecap="round" stroke-linejoin="round"/></svg>
<svg class="abs" style="left:701.6px;top:1140.5px" width="18.4" height="18.4" viewBox="0 0 16 16"><path d="M1.7 4.2c0-.8.6-1.400 1.400-1.400h2.600c.4 0 .8.200 1 .5l1 1.200h5.200c.8 0 1.400.6 1.400 1.400v6.200c0 .8-.6 1.400-1.400 1.400H3.100c-.8 0-1.400-.6-1.400-1.400z" fill="#43454a" stroke="#ced0d6" stroke-width="1.05" stroke-linejoin="round"/><circle cx="5.2" cy="9.3" r="1.3" fill="none" stroke="#ced0d6" stroke-width="1"/></svg>
<div class="tr" style="left:723.9px;top:1138.5px">config</div>
<svg class="abs" style="left:681.4px;top:1170.8px" width="12" height="12" viewBox="0 0 12 12"><path d="M1.7 3.800L6 8.100l4.300-4.300" fill="none" stroke="#9da0a8" stroke-width="1.300" stroke-linecap="round" stroke-linejoin="round"/></svg>
<svg class="abs" style="left:701.6px;top:1167.6px" width="18.4" height="18.4" viewBox="0 0 16 16"><path d="M1.7 4.2c0-.8.6-1.400 1.400-1.400h2.600c.4 0 .8.200 1 .5l1 1.200h5.200c.8 0 1.400.6 1.400 1.400v6.200c0 .8-.6 1.400-1.400 1.400H3.100c-.8 0-1.400-.6-1.400-1.400z" fill="#43454a" stroke="#ced0d6" stroke-width="1.05" stroke-linejoin="round"/></svg>
<div class="tr" style="left:723.9px;top:1165.6px">templates</div>
<svg class="abs" style="left:723.8px;top:1195.9px" width="17" height="16" viewBox="0 0 17 16"><path d="M6.300 3.700L1.800 8l4.500 4.300M10.700 3.700L15.200 8l-4.500 4.300" fill="none" stroke="#6aab73" stroke-width="1.400" stroke-linecap="round" stroke-linejoin="round"/></svg>
<div class="tr" style="left:745.3px;top:1192.7px">blog_list.html</div>
<svg class="abs" style="left:702.9px;top:1223.0px" width="16" height="16" viewBox="0 0 16 16"><path d="M1.500 3h13M1.500 6.400h8.500M1.500 9.800h13M1.500 13.200h8.500" fill="none" stroke="#ced0d6" stroke-width="1.300"/></svg>
<div class="tr" style="left:723.9px;top:1219.8px">.python-version</div>
<svg class="abs" style="left:702.9px;top:1249.5px" width="16" height="17" viewBox="0 0 16 17"><g fill="none" stroke="#ced0d6" stroke-width="1.200"><ellipse cx="8" cy="3.600" rx="6.200" ry="2.400"/><path d="M1.800 3.600v9.800c0 1.300 2.800 2.400 6.200 2.400s6.200-1.100 6.200-2.400V3.600"/><path d="M1.800 6.900c0 1.300 2.800 2.400 6.200 2.400s6.200-1.100 6.200-2.400M1.800 10.200c0 1.300 2.800 2.400 6.200 2.400s6.200-1.100 6.200-2.400"/></g></svg>
<div class="tr" style="left:723.9px;top:1246.8px">db.sqlite3</div>
<svg class="abs" style="left:702.2px;top:1275.4px" width="17.6" height="17.8" viewBox="0 0 24 24" preserveAspectRatio="none"><path fill="#548af7" d="M12 1C7 1 7.200 3.200 7.200 3.200V6h5v1H4.500S1 6.600 1 12s3 5.200 3 5.200h2.500v-3s-.2-3 2.900-3h5.200s2.800.1 2.800-2.700V3.800S17.900 1 12 1z"/><circle cx="9.400" cy="3.700" r="1" fill="#1e1f22"/><g transform="rotate(180 12 12)"><path fill="#f2c55c" d="M12 1C7 1 7.200 3.200 7.200 3.200V6h5v1H4.500S1 6.600 1 12s3 5.200 3 5.200h2.500v-3s-.2-3 2.900-3h5.200s2.800.1 2.800-2.700V3.800S17.900 1 12 1z"/><circle cx="9.400" cy="3.700" r="1" fill="#1e1f22"/></g></svg>
<div class="tr" style="left:723.9px;top:1273.9px">manage.py</div>
<svg class="abs" style="left:702.9px;top:1304.2px" width="16" height="16" viewBox="0 0 16 16"><rect x="1.200" y="1.200" width="13.600" height="13.600" rx="2.200" fill="#25324d" stroke="#548af7" stroke-width="1.300"/><path d="M4.700 4.800h6.600M8 4.800v6.800" fill="none" stroke="#ced0d6" stroke-width="1.400"/></svg>
<div class="tr" style="left:723.9px;top:1301.0px">poetry.lock</div>
<svg class="abs" style="left:702.9px;top:1331.3px" width="16" height="16" viewBox="0 0 16 16"><rect x="1.200" y="1.200" width="13.600" height="13.600" rx="2.200" fill="#25324d" stroke="#548af7" stroke-width="1.300"/><path d="M4.700 4.800h6.600M8 4.800v6.800" fill="none" stroke="#ced0d6" stroke-width="1.400"/></svg>
<div class="tr" style="left:723.9px;top:1328.1px">pyproject.toml</div>
<div class="red" style="left:668px;top:1166.3px;width:204.5px;height:54.7px"></div>
<!--/TREE-->
<!--ICONS-->
<!-- ============ IDE ICONS ============ -->
<svg class="abs" style="left:20.6px;top:30.3px" width="23.2" height="23.4" viewBox="0 0 24 24" preserveAspectRatio="none"><path fill="#548af7" d="M12 1C7 1 7.200 3.200 7.200 3.200V6h5v1H4.500S1 6.600 1 12s3 5.200 3 5.200h2.500v-3s-.2-3 2.900-3h5.200s2.800.1 2.800-2.700V3.800S17.900 1 12 1z"/><circle cx="9.400" cy="3.700" r="1" fill="#1e1f22"/><g transform="rotate(180 12 12)"><path fill="#f2c55c" d="M12 1C7 1 7.200 3.200 7.200 3.200V6h5v1H4.500S1 6.600 1 12s3 5.200 3 5.200h2.500v-3s-.2-3 2.900-3h5.200s2.800.1 2.800-2.700V3.800S17.900 1 12 1z"/><circle cx="9.400" cy="3.700" r="1" fill="#1e1f22"/></g></svg>
<svg class="abs" style="left:149.4px;top:35.1px" width="14" height="14" viewBox="-7 -7 14 14"><path d="M-5.300-5.300L5.300 5.300M5.300-5.300L-5.300 5.300" stroke="#6f737a" stroke-width="1.400" stroke-linecap="round"/></svg>
<svg class="abs" style="left:20px;top:444px" width="25" height="15" viewBox="0 0 25 15" fill="none" stroke="#5fa467" stroke-width="1.700" stroke-linecap="round" stroke-linejoin="round"><path d="M9.500 1.800L1.800 7.600l7.700 5.800M15.500 1.800l7.700 5.800-7.700 5.800"/></svg>
<svg class="abs" style="left:195.7px;top:444.6px" width="14" height="14" viewBox="-7 -7 14 14"><path d="M-5.300-5.300L5.300 5.300M5.300-5.300L-5.300 5.300" stroke="#6f737a" stroke-width="1.400" stroke-linecap="round"/></svg>
<svg class="abs" style="left:20.6px;top:949.3px" width="23.2" height="23.4" viewBox="0 0 24 24" preserveAspectRatio="none"><path fill="#548af7" d="M12 1C7 1 7.200 3.200 7.200 3.200V6h5v1H4.500S1 6.600 1 12s3 5.200 3 5.200h2.500v-3s-.2-3 2.900-3h5.200s2.800.1 2.800-2.700V3.800S17.900 1 12 1z"/><circle cx="9.400" cy="3.700" r="1" fill="#1e1f22"/><g transform="rotate(180 12 12)"><path fill="#f2c55c" d="M12 1C7 1 7.200 3.200 7.200 3.200V6h5v1H4.500S1 6.600 1 12s3 5.200 3 5.200h2.500v-3s-.2-3 2.900-3h5.200s2.800.1 2.800-2.700V3.800S17.900 1 12 1z"/><circle cx="9.400" cy="3.700" r="1" fill="#1e1f22"/></g></svg>
<svg class="abs" style="left:131px;top:954px" width="14" height="14" viewBox="-7 -7 14 14"><path d="M-5.300-5.300L5.300 5.300M5.300-5.300L-5.300 5.300" stroke="#6f737a" stroke-width="1.400" stroke-linecap="round"/></svg>
<svg class="abs" style="left:950.2px;top:696.6px" width="22.6" height="23" viewBox="0 0 24 24" preserveAspectRatio="none"><path fill="#548af7" d="M12 1C7 1 7.200 3.200 7.200 3.200V6h5v1H4.500S1 6.600 1 12s3 5.200 3 5.200h2.500v-3s-.2-3 2.900-3h5.200s2.800.1 2.800-2.700V3.800S17.900 1 12 1z"/><circle cx="9.400" cy="3.700" r="1" fill="#1e1f22"/><g transform="rotate(180 12 12)"><path fill="#f2c55c" d="M12 1C7 1 7.200 3.200 7.200 3.200V6h5v1H4.500S1 6.600 1 12s3 5.200 3 5.200h2.500v-3s-.2-3 2.900-3h5.200s2.800.1 2.800-2.700V3.800S17.900 1 12 1z"/><circle cx="9.400" cy="3.700" r="1" fill="#1e1f22"/></g></svg>
<svg class="abs" style="left:1122.6px;top:696.6px" width="22.6" height="23" viewBox="0 0 24 24" preserveAspectRatio="none"><path fill="#548af7" d="M12 1C7 1 7.200 3.200 7.200 3.200V6h5v1H4.500S1 6.600 1 12s3 5.200 3 5.200h2.500v-3s-.2-3 2.900-3h5.200s2.800.1 2.800-2.700V3.800S17.900 1 12 1z"/><circle cx="9.400" cy="3.700" r="1" fill="#1e1f22"/><g transform="rotate(180 12 12)"><path fill="#f2c55c" d="M12 1C7 1 7.200 3.200 7.200 3.200V6h5v1H4.500S1 6.600 1 12s3 5.200 3 5.200h2.500v-3s-.2-3 2.900-3h5.200s2.800.1 2.800-2.700V3.800S17.900 1 12 1z"/><circle cx="9.400" cy="3.700" r="1" fill="#1e1f22"/></g></svg>
<svg class="abs" style="left:1268.5px;top:700.8px" width="14" height="14" viewBox="-7 -7 14 14"><path d="M-5.300-5.300L5.300 5.300M5.300-5.300L-5.300 5.300" stroke="#6f737a" stroke-width="1.400" stroke-linecap="round"/></svg>
<svg class="abs" style="left:41.6px;top:215.4px" width="21" height="21" viewBox="-10.500 -10.500 21 21" fill="none" stroke="#a8abb2" stroke-width="1.250"><circle r="8.600"/><ellipse rx="3.900" ry="8.600"/><path d="M0-8.600V8.600M-8-3H8M-8 3H8"/></svg>
<svg class="abs" style="left:41.6px;top:1033.1px" width="21" height="21" viewBox="-10.500 -10.500 21 21" fill="none" stroke="#a8abb2" stroke-width="1.250"><circle r="8.600"/><ellipse rx="3.900" ry="8.600"/><path d="M0-8.600V8.600M-8-3H8M-8 3H8"/></svg>
<svg class="abs" style="left:41.6px;top:1168.1px" width="21" height="21" viewBox="-10.500 -10.500 21 21" fill="none" stroke="#a8abb2" stroke-width="1.250"><circle r="8.600"/><ellipse rx="3.900" ry="8.600"/><path d="M0-8.600V8.600M-8-3H8M-8 3H8"/></svg>
<svg class="abs" style="left:41.6px;top:1235.6px" width="21" height="21" viewBox="-10.500 -10.500 21 21" fill="none" stroke="#a8abb2" stroke-width="1.250"><circle r="8.600"/><ellipse rx="3.900" ry="8.600"/><path d="M0-8.600V8.600M-8-3H8M-8 3H8"/></svg>
<svg class="abs" style="left:41.6px;top:1303.0px" width="21" height="21" viewBox="-10.500 -10.500 21 21" fill="none" stroke="#a8abb2" stroke-width="1.250"><circle r="8.600"/><ellipse rx="3.900" ry="8.600"/><path d="M0-8.600V8.600M-8-3H8M-8 3H8"/></svg>
<svg class="abs" style="left:102.3px;top:185.1px" width="17" height="18" viewBox="0 -9 17 18" fill="none" stroke="#868a91" stroke-width="1.250"><circle cx="2.900" cy="0" r="2.200"/><circle cx="13.300" cy="-5.200" r="2.200"/><circle cx="13.300" cy="5.200" r="2.200"/><path d="M4.900-1L11.300-4.200M4.900 1L11.300 4.200"/></svg>
<svg class="abs" style="left:102.3px;top:1002.6px" width="17" height="18" viewBox="0 -9 17 18" fill="none" stroke="#868a91" stroke-width="1.250"><circle cx="2.900" cy="0" r="2.200"/><circle cx="13.300" cy="-5.200" r="2.200"/><circle cx="13.300" cy="5.200" r="2.200"/><path d="M4.900-1L11.300-4.200M4.900 1L11.300 4.200"/></svg>
<svg class="abs" style="left:102.3px;top:1137.6px" width="17" height="18" viewBox="0 -9 17 18" fill="none" stroke="#868a91" stroke-width="1.250"><circle cx="2.900" cy="0" r="2.200"/><circle cx="13.300" cy="-5.200" r="2.200"/><circle cx="13.300" cy="5.200" r="2.200"/><path d="M4.900-1L11.300-4.200M4.900 1L11.300 4.200"/></svg>
<svg class="abs" style="left:150.1px;top:1205.1px" width="17" height="18" viewBox="0 -9 17 18" fill="none" stroke="#868a91" stroke-width="1.250"><circle cx="2.900" cy="0" r="2.200"/><circle cx="13.300" cy="-5.200" r="2.200"/><circle cx="13.300" cy="5.200" r="2.200"/><path d="M4.900-1L11.300-4.200M4.900 1L11.300 4.200"/></svg>
<svg class="abs" style="left:150.1px;top:1272.6px" width="17" height="18" viewBox="0 -9 17 18" fill="none" stroke="#868a91" stroke-width="1.250"><circle cx="2.900" cy="0" r="2.200"/><circle cx="13.300" cy="-5.200" r="2.200"/><circle cx="13.300" cy="5.200" r="2.200"/><path d="M4.900-1L11.300-4.200M4.900 1L11.300 4.200"/></svg>
<svg class="abs" style="left:114.7px;top:1297.3px" width="16" height="24" viewBox="0 0 16 24"><path d="M8 .3a7.500 7.500 0 0 1 4.400 13.600c-.8.600-1.100 1.300-1.100 2.400H4.700c0-1.100-.3-1.800-1.100-2.400A7.500 7.500 0 0 1 8 .3z" fill="#f0c664"/><path d="M4.600 18.700h6.800M4.900 21.900h6.200" stroke="#ced0d6" stroke-width="1.700"/></svg>
<svg class="abs" style="left:1056.3px;top:859.8px" width="16" height="24" viewBox="0 0 16 24"><path d="M8 .3a7.500 7.500 0 0 1 4.400 13.600c-.8.600-1.100 1.300-1.100 2.400H4.700c0-1.100-.3-1.800-1.100-2.400A7.500 7.500 0 0 1 8 .3z" fill="#f0c664"/><path d="M4.600 18.700h6.800M4.900 21.900h6.200" stroke="#ced0d6" stroke-width="1.700"/></svg>
<div class="abs" style="left:579.300px;top:1300.5px;width:2.400px;height:26px;background:#ced0d6"></div>
<div class="abs" style="left:1495.800px;top:858.500px;width:2.200px;height:25px;background:#ced0d6"></div>
<svg class="abs" style="left:860px;top:860px;z-index:6" width="250" height="340" viewBox="860 860 250 340" fill="none" stroke="#b5362e" stroke-width="2.700" stroke-linecap="round" stroke-linejoin="round"><path d="M873.500 1187.500L1094 875.500M1082 880.500l12.300-5.500 -1 13.500"/></svg>
<!--/ICONS-->
</body>
</html>
